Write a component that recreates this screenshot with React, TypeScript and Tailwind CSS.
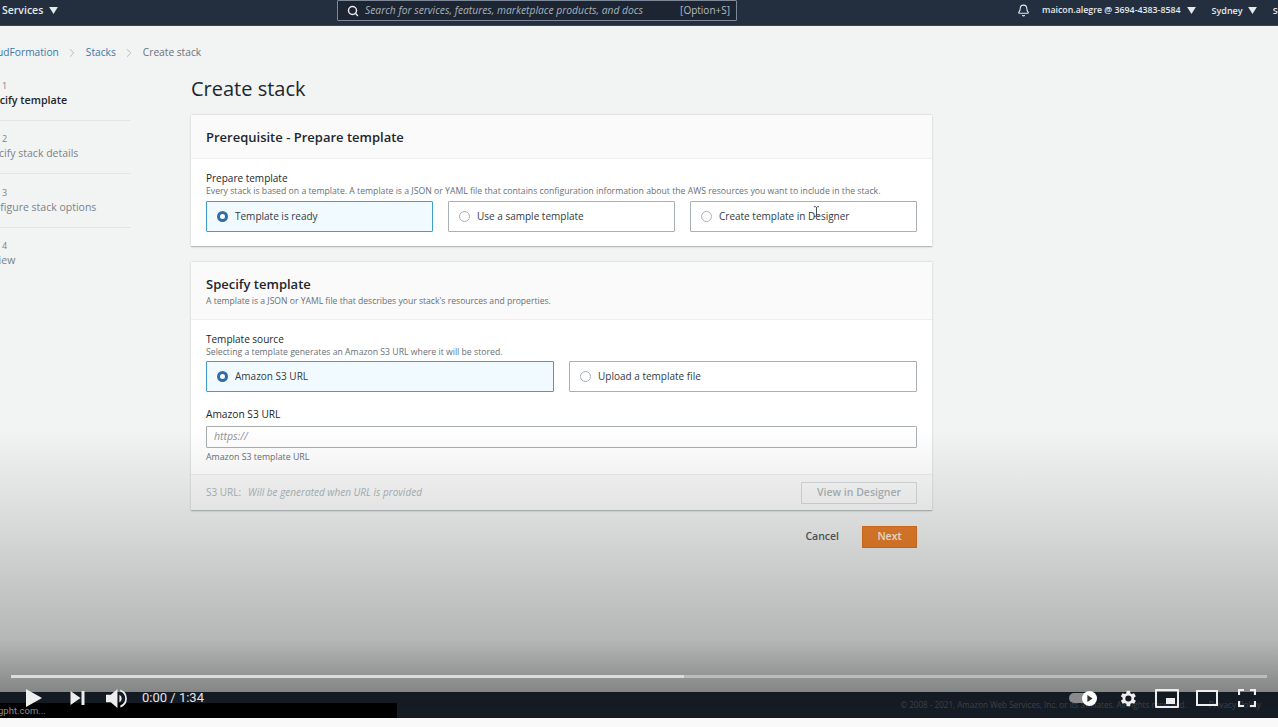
import React from 'react';
import { Bell, ChevronRight, Search } from 'lucide-react';

const font = { ember: "font-['Open_Sans',sans-serif]" };

const Caret = ({ className = '' }: { className?: string }) => (
  <svg viewBox="0 0 10 8" width="9" height="7" className={'shrink-0 ' + className}>
    <path d="M0 0h10L5 8z" fill="currentColor" />
  </svg>
);

const steps = [
  { step: 'Step 1', label: 'Specify template', active: true },
  { step: 'Step 2', label: 'Specify stack details' },
  { step: 'Step 3', label: 'Configure stack options' },
  { step: 'Step 4', label: 'Review' },
];

const RadioTile = ({ label, selected, className = '' }: { label: string; selected?: boolean; className?: string }) => (
  <div
    className={
      'h-[31px] flex items-center pl-[10px] gap-[7px] border rounded-[1px] ' +
      (selected ? 'border-[#3f9fc4] bg-[#f1faff] ' : 'border-[#a9b0b3] bg-white ') +
      className
    }
  >
    {selected ? (
      <span className="w-[11px] h-[11px] rounded-full border-[3px] border-[#2f6fa8] bg-white" />
    ) : (
      <span className="w-[11px] h-[11px] rounded-full border border-[#a9b0b3] bg-white" />
    )}
    <span className="text-[10px] text-[#333b41]">{label}</span>
  </div>
);

const Controls = () => (
  <div className="absolute left-0 right-0 bottom-0 h-[48px]">
    <div className="mx-[11px] mt-[5px] h-[3px] flex">
      <div className="w-[673px] bg-[#dcdcdc]" />
      <div className="flex-1 bg-[#bcbcbc]" />
    </div>
    <div className="flex items-center h-[40px] pl-[26px] pr-[22px] text-[#eeeeee]">
      <svg viewBox="0 0 16 18" width="16" height="18">
        <path d="M0 0l16 9-16 9z" fill="currentColor" />
      </svg>
      <svg viewBox="0 0 14 14" width="15" height="14" className="ml-[28px]">
        <path d="M0 0l10 7-10 7zM11 0h3v14h-3z" fill="currentColor" />
      </svg>
      <svg viewBox="0 0 22 22" width="21" height="21" className="ml-[21px]">
        <path d="M0 7h5l7-6v20l-7-6H0z" fill="currentColor" />
        <path d="M14 7a4.5 4.5 0 0 1 0 8z" fill="currentColor" />
        <path d="M15 1.5a10 10 0 0 1 0 19v-2.2a7.8 7.8 0 0 0 0-14.6z" fill="currentColor" />
      </svg>
      <span className="ml-[15px] text-[13px] font-['Roboto',sans-serif] text-[#e4e4e4]">0:00 / 1:34</span>
      <div className="flex-1" />
      <div className="relative w-[28px] h-[15px] mr-[20px]">
        <div className="absolute left-0 top-[2px] w-[24px] h-[10px] rounded-full bg-[#8a8a8a]" />
        <div className="absolute right-0 top-0 w-[15px] h-[15px] rounded-full bg-white flex items-center justify-center">
          <svg viewBox="0 0 6 8" width="6" height="7">
            <path d="M0 0l6 4-6 4z" fill="#333" />
          </svg>
        </div>
      </div>
      <svg viewBox="0 0 24 24" width="21" height="21" className="mr-[17px]">
        <path
          fill="currentColor"
          d="M19.4 13a7.5 7.5 0 0 0 0-2l2.1-1.6-2-3.5-2.5 1a7.7 7.7 0 0 0-1.7-1L15 3.2h-4l-.4 2.7a7.7 7.7 0 0 0-1.7 1l-2.5-1-2 3.5L6.5 11a7.5 7.5 0 0 0 0 2l-2.1 1.6 2 3.5 2.5-1a7.7 7.7 0 0 0 1.7 1l.4 2.7h4l.4-2.7a7.7 7.7 0 0 0 1.7-1l2.5 1 2-3.5zM13 15.5a3.5 3.5 0 1 1 0-7 3.5 3.5 0 0 1 0 7z"
        />
      </svg>
      <div className="relative w-[24px] h-[19px] border-[2px] border-[#eeeeee] rounded-[1px] mr-[17px]">
        <div className="absolute right-[2px] bottom-[2px] w-[9px] h-[6px] bg-[#eeeeee]" />
      </div>
      <div className="w-[22px] h-[16px] border-[2px] border-[#eeeeee] mr-[20px]" />
      <svg viewBox="0 0 18 18" width="18" height="18">
        <path d="M1 6V1h5M12 1h5v5M17 12v5h-5M6 17H1v-5" fill="none" stroke="currentColor" strokeWidth="2.2" />
      </svg>
    </div>
  </div>
);

export default function App() {
  return (
    <div className={'w-[1278px] h-[727px] overflow-hidden bg-[#f9f9f9] ' + font.ember}>
      <div className="relative h-[718px] overflow-hidden bg-[#f2f3f3] flex flex-col">
        {/* aws top bar */}
        <div className="h-[26px] shrink-0 bg-[#232f3e] border-b border-[#3b4653] flex items-center pb-[4px] text-[#e6e8ea] whitespace-nowrap">
          <div className="ml-[2px] flex items-center gap-[6px] w-[335px] shrink-0">
            <span className="text-[10.5px] font-semibold">Services</span>
            <Caret />
          </div>
          <div className="w-[400px] h-[21px] shrink-0 border border-[#7d8998] rounded-[1px] bg-[#1c2531] flex items-center pl-[9px] pr-[6px]">
            <Search size={12} strokeWidth={3} className="text-[#e6e8ea] shrink-0" />
            <span className="ml-[6px] text-[10.3px] italic text-[#a9b2bb]">
              Search for services, features, marketplace products, and docs
            </span>
            <span className="ml-auto text-[10px] text-[#b5bcc4]">[Option+S]</span>
          </div>
          <Bell size={13} strokeWidth={2} className="ml-[280px] shrink-0 text-[#e6e8ea]" />
          <span className="ml-[12px] text-[8.8px] font-semibold">maicon.alegre @ 3694-4383-8584</span>
          <Caret className="ml-[6px]" />
          <span className="ml-[16px] text-[9px] font-semibold">Sydney</span>
          <Caret className="ml-[5px]" />
          <span className="ml-[16px] text-[9px] font-semibold">Support</span>
        </div>

        {/* breadcrumbs */}
        <div className="h-[52px] pt-[1px] shrink-0 flex items-center -ml-[18px] text-[10.2px]">
          <span className="text-[#3b77a8] whitespace-nowrap">CloudFormation</span>
          <ChevronRight size={14} strokeWidth={1} className="mx-[6.5px] text-[#8b9398]" />
          <span className="text-[#3b77a8]">Stacks</span>
          <ChevronRight size={14} strokeWidth={1} className="mx-[6.5px] text-[#8b9398]" />
          <span className="text-[#6a7278]">Create stack</span>
        </div>

        <div className="flex flex-1 min-h-0">
          {/* wizard steps */}
          <div className="w-[131px] shrink-0 mr-[60px] pt-[1px] overflow-hidden">
            {steps.map((s, i) => (
              <div key={s.step} className="-ml-[19px]">
                <div className="h-[41px]">
                  <div className="text-[9px] leading-[14px] text-[#7b8388]">{s.step}</div>
                  <div
                    className={
                      'leading-[15px] whitespace-nowrap ' +
                      (s.active ? 'text-[10.7px] font-semibold text-[#1f262b]' : 'text-[10.5px] text-[#7b8388]')
                    }
                  >
                    {s.label}
                  </div>
                </div>
                {i < 3 && <div className="h-[1px] bg-[#e3e5e6] mb-[11.3px]" />}
              </div>
            ))}
          </div>

          <div className="w-[741px] shrink-0 -mt-[1px]">
            <h1 className="text-[20px] leading-[24px] text-[#20272d] mb-[14px]">Create stack</h1>

            {/* prerequisite card */}
            <div className="bg-white border-b border-[#b7bcbf] shadow-[0_0_2px_rgba(0,0,0,0.2)] h-[132px] mb-[15px]">
              <div className="h-[44px] pt-[2px] bg-[#fafafa] border-b border-[#eeeeee] flex items-center px-[15px]">
                <h2 className="text-[13px] font-semibold text-[#20272d]">Prerequisite - Prepare template</h2>
              </div>
              <div className="px-[15px] pt-[13px]">
                <div className="text-[10px] leading-[13px] text-[#20272d]">Prepare template</div>
                <div className="text-[8.7px] leading-[13px] text-[#687078] whitespace-nowrap">
                  Every stack is based on a template. A template is a JSON or YAML file that contains configuration
                  information about the AWS resources you want to include in the stack.
                </div>
                <div className="grid grid-cols-3 gap-[15px] mt-[3px]">
                  <RadioTile label="Template is ready" selected />
                  <RadioTile label="Use a sample template" />
                  <RadioTile label="Create template in Designer" />
                </div>
              </div>
            </div>

            {/* specify template card */}
            <div className="bg-white border-b border-[#b7bcbf] shadow-[0_0_2px_rgba(0,0,0,0.2)] h-[249px]">
              <div className="h-[58px] bg-[#fafafa] border-b border-[#eeeeee] px-[15px] pt-[14px]">
                <h2 className="text-[13px] leading-[17px] font-semibold text-[#20272d]">Specify template</h2>
                <div className="mt-[1px] text-[8.6px] leading-[14px] text-[#687078]">
                  A template is a JSON or YAML file that describes your stack's resources and properties.
                </div>
              </div>
              <div className="px-[15px] pt-[13px] h-[154px]">
                <div className="text-[10px] leading-[13px] text-[#20272d]">Template source</div>
                <div className="text-[8.7px] leading-[13px] text-[#687078]">
                  Selecting a template generates an Amazon S3 URL where it will be stored.
                </div>
                <div className="grid grid-cols-2 gap-[15px] mt-[2px]">
                  <RadioTile label="Amazon S3 URL" selected />
                  <RadioTile label="Upload a template file" />
                </div>
                <div className="mt-[15px] text-[10.2px] leading-[14px] text-[#20272d]">Amazon S3 URL</div>
                <div className="mt-[5px] h-[22px] border border-[#a9b0b3] rounded-[1px] bg-white flex items-center px-[7px] text-[10.5px] italic text-[#8d959b]">
                  https://
                </div>
                <div className="mt-[2px] text-[8.8px] leading-[14px] text-[#687078]">Amazon S3 template URL</div>
              </div>
              <div className="h-[36px] bg-[#fafafa] border-t border-[#eeeeee] flex items-center justify-between px-[15px]">
                <div className="text-[10px] italic text-[#aab7b8]">
                  <span className="not-italic">S3 URL:</span>
                  <span className="ml-[7px]">Will be generated when URL is provided</span>
                </div>
                <div className="w-[116px] h-[22px] border border-[#d5dbdb] flex items-center justify-center text-[10.5px] font-semibold text-[#aab7b8]">
                  View in Designer
                </div>
              </div>
            </div>

            <div className="mt-[15px] flex items-center justify-end pr-[15px]">
              <span className="text-[10.5px] font-semibold text-[#545b64] mr-[23px]">Cancel</span>
              <div className="w-[55px] h-[22px] bg-[#ea812c] border border-[#e07420] flex items-center justify-center text-[10.5px] font-semibold text-[#fff3e4]">
                Next
              </div>
            </div>
          </div>
        </div>

        {/* aws footer, sits under the video scrim */}
        <div className="h-[26px] shrink-0 bg-[#232f3e] flex items-center justify-end pr-[17px] text-[8.1px] text-[#66707b]">
          <span>© 2008 - 2021, Amazon Web Services, Inc. or its affiliates. All rights reserved.</span>
          <span className="ml-[22px] text-[8.4px]">Privacy Policy</span>
        </div>

        {/* mouse cursor in the recording */}
        <svg viewBox="0 0 8 12" width="7" height="11" className="absolute left-[813px] top-[206px]">
          <path d="M1 .5h2l1 1 1-1h2M4 1.5v9M1 11.5h2l1-1 1 1h2" fill="none" stroke="#333" strokeWidth="1" />
        </svg>

        {/* video scrim */}
        <div className="absolute inset-x-0 bottom-0 h-[290px] pointer-events-none bg-[linear-gradient(to_bottom,rgba(0,0,0,0)_0%,rgba(0,0,0,0.1)_32%,rgba(0,0,0,0.25)_73%,rgba(0,0,0,0.45)_91%,rgba(0,0,0,0.4)_100%)]" />
        <div className="absolute left-0 bottom-0 w-[397px] h-[15px] bg-black text-[9.5px] leading-[15px] text-[#8a8a8a] font-['Roboto',sans-serif]">
          <span className="-ml-[2px]">gpht.com...</span>
        </div>
        <Controls />
      </div>
    </div>
  );
}
